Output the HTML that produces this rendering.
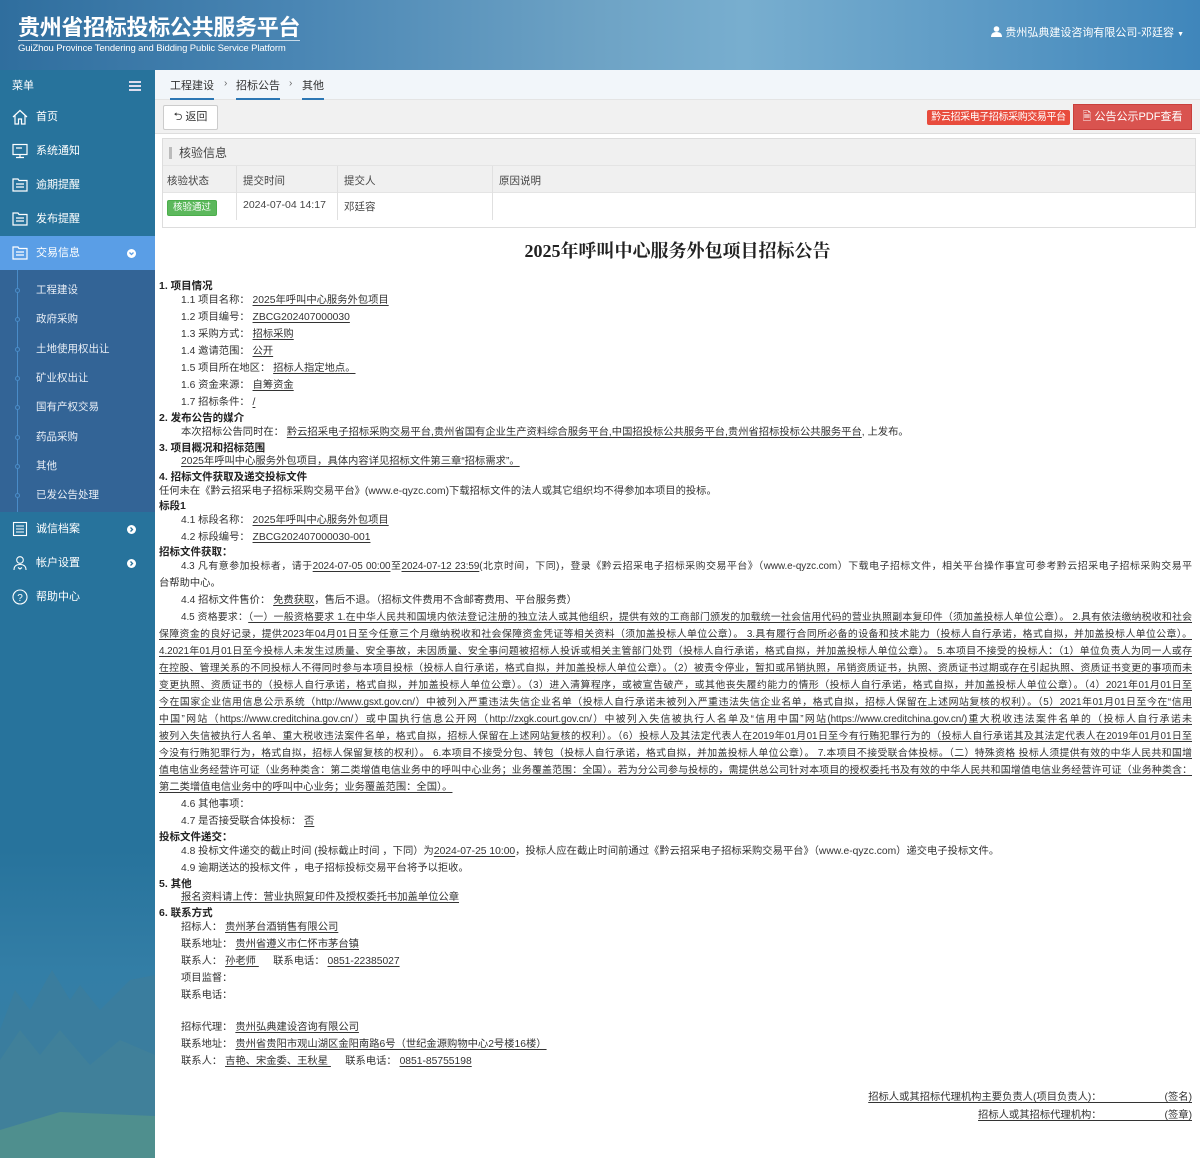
<!DOCTYPE html>
<html><head><meta charset="utf-8">
<style>
*{margin:0;padding:0;box-sizing:border-box}
body{width:1200px;height:1158px;overflow:hidden;position:relative;background:#fff;font-family:"Liberation Sans","Noto Sans CJK SC",sans-serif;font-size:11px;color:#333}
.hdr{position:absolute;left:0;top:0;width:1200px;height:70px;background:linear-gradient(90deg,#2f6e9e 0%,#4a86b4 25%,#6ea3c5 50%,#78aecf 62%,#5f9cc6 80%,#3f86bb 100%);box-shadow:0 2px 4px rgba(0,0,0,.3)}
.hdr .t1{position:absolute;left:18px;top:12px;color:#fff;font-size:22px;font-weight:bold;font-family:"Noto Sans CJK SC",sans-serif;letter-spacing:-0.3px;border-bottom:1px solid rgba(255,255,255,.7);line-height:28px}
.hdr .t2{position:absolute;left:18px;top:43px;color:#fff;font-size:9.5px;letter-spacing:-0.1px}
.hdr .u{position:absolute;right:16px;top:24px;color:#fff;font-size:11px}
.side{position:absolute;left:0;top:70px;width:155px;height:1088px;background:#27739c;color:#fff;overflow:hidden}
.side .it{position:absolute;left:0;width:155px;height:34px;line-height:34px;padding-left:36px;font-size:11px}
.side .ic{position:absolute;left:12px;top:9px;width:16px;height:16px}
.sub{position:absolute;left:0;top:200px;width:155px;height:242px;background:#336496}
.sub .vl{position:absolute;left:17px;top:0;width:1px;height:242px;background:#4a8cc8}
.sub div.s{position:absolute;left:36px;font-size:10.5px;color:#e8eef6}
.sub div.s:before{content:"";position:absolute;left:-21px;top:6px;width:3px;height:3px;border:1px solid #4a8cc8;border-radius:50%;background:#336496}
.arr{position:absolute;left:127px;top:13px;width:9px;height:9px;border-radius:50%;background:#fff}
.crumb{position:absolute;left:155px;top:70px;width:1045px;height:30px;background:#f2f6fa;border-bottom:1px solid #e4e4e4}
.crumb span{position:absolute;top:7px;font-size:11px;color:#333;border-bottom:2px solid #2d77b4;padding-bottom:5px}
.crumb i{position:absolute;top:8px;font-style:normal;color:#666;font-size:10px}
.tool{position:absolute;left:155px;top:100px;width:1045px;height:34px;background:#f1f1f1;border-bottom:1px solid #ddd}
.l{position:absolute;left:159px;white-space:nowrap;font-size:10.3px;color:#333;line-height:14px}
.in{left:181px}
.b{font-weight:bold;color:#222;font-size:10.5px}
u{text-decoration:underline;text-underline-offset:2px}
.j{width:1033px;text-align:justify;text-align-last:justify;white-space:normal;height:15px;overflow:hidden;font-size:9.9px;letter-spacing:-0.05px}
</style></head><body>
<div class="hdr">
<div class="t1">贵州省招标投标公共服务平台</div>
<div class="t2">GuiZhou Province Tendering and Bidding Public Service Platform</div>
<div class="u"><svg width="11" height="11" viewBox="0 0 11 11" style="vertical-align:-1px"><circle cx="5.5" cy="3" r="2.8" fill="#fff"/><path d="M0 11 Q0 6 5.5 6 Q11 6 11 11Z" fill="#fff"/></svg> 贵州弘典建设咨询有限公司-邓廷容 <span style="font-size:7px">▼</span></div>
</div>
<div class="side">
<svg style="position:absolute;left:0;top:780px" width="155" height="308" viewBox="0 0 155 308"><defs><linearGradient id="g" x1="0" y1="0" x2="0" y2="1"><stop offset="0" stop-color="#27739c"/><stop offset="0.4" stop-color="#337ea6"/><stop offset="1" stop-color="#3a7fa2"/></linearGradient></defs><rect width="155" height="308" fill="url(#g)"/><path d="M0 180 L15 140 L30 160 L52 120 L70 150 L80 135 L100 160 L130 130 L155 125 L155 308 L0 308Z" fill="#3a7d9e"/><path d="M0 210 L20 180 L40 205 L60 180 L90 215 L120 190 L155 205 L155 308 L0 308Z" fill="#40809a"/><path d="M0 280 L60 262 L155 266 L155 308 L0 308Z" fill="#4f8f8e"/></svg>
<div class="it" style="top:0;height:30px;line-height:32px;padding-left:12px;background:#27739c">菜单<span style="position:absolute;left:129px;top:11px;width:12px;height:2px;background:#dde;box-shadow:0 4px 0 #dde,0 8px 0 #dde"></span></div>
<div class="it" style="top:30px"><svg class="ic" viewBox="0 0 16 16"><path d="M1 8 L8 1.5 L15 8 M3 6.5 V15 H6.5 V10 H9.5 V15 H13 V6.5" fill="none" stroke="#fff" stroke-width="1.2"/></svg>首页</div>
<div class="it" style="top:64px"><svg class="ic" viewBox="0 0 16 16"><rect x="1" y="1.5" width="14" height="10" fill="none" stroke="#fff" stroke-width="1.2"/><path d="M8 11.5 V14 M4 14.5 H12 M4 5 H10" stroke="#fff" stroke-width="1.2"/></svg>系统通知</div>
<div class="it" style="top:98px"><svg class="ic" viewBox="0 0 16 16"><path d="M1 2 H6 L7 3.5 H15 V14 H1Z M4 7 H12 M4 10 H12" fill="none" stroke="#fff" stroke-width="1.2"/></svg>逾期提醒</div>
<div class="it" style="top:132px"><svg class="ic" viewBox="0 0 16 16"><path d="M1 2 H6 L7 3.5 H15 V14 H1Z M4 7 H12 M4 10 H12" fill="none" stroke="#fff" stroke-width="1.2"/></svg>发布提醒</div>
<div class="it" style="top:166px;background:#5a9ee6"><svg class="ic" viewBox="0 0 16 16"><path d="M1 2 H6 L7 3.5 H15 V14 H1Z M4 7 H12 M4 10 H12" fill="none" stroke="#fff" stroke-width="1.2"/></svg>交易信息<span class="arr"><svg width="9" height="9" viewBox="0 0 9 9" style="position:absolute;top:0;left:0"><path d="M2.5 3.5 L4.5 5.5 L6.5 3.5" fill="none" stroke="#5a9ee6" stroke-width="1.3"/></svg></span></div>
<div class="sub"><div class="vl"></div>
<div class="s" style="top:12px">工程建设</div><div class="s" style="top:41px">政府采购</div><div class="s" style="top:71px">土地使用权出让</div><div class="s" style="top:100px">矿业权出让</div><div class="s" style="top:129px">国有产权交易</div><div class="s" style="top:159px">药品采购</div><div class="s" style="top:188px">其他</div><div class="s" style="top:217px">已发公告处理</div></div>
<div class="it" style="top:442px"><svg class="ic" viewBox="0 0 16 16"><rect x="1.5" y="1.5" width="13" height="13" fill="none" stroke="#fff" stroke-width="1.1"/><path d="M4 5 H12 M4 8 H12 M4 11 H12" stroke="#fff"/></svg>诚信档案<span class="arr"><svg width="9" height="9" viewBox="0 0 9 9" style="position:absolute;top:0;left:0"><path d="M3.5 2.5 L5.5 4.5 L3.5 6.5" fill="none" stroke="#27739c" stroke-width="1.3"/></svg></span></div>
<div class="it" style="top:476px"><svg class="ic" viewBox="0 0 16 16"><circle cx="8" cy="5" r="3.3" fill="none" stroke="#fff" stroke-width="1.1"/><path d="M2 15 Q2 9.5 8 9.5 Q14 9.5 14 15 M6 12.5 L8 14 L10 12.5" fill="none" stroke="#fff" stroke-width="1.1"/></svg>帐户设置<span class="arr"><svg width="9" height="9" viewBox="0 0 9 9" style="position:absolute;top:0;left:0"><path d="M3.5 2.5 L5.5 4.5 L3.5 6.5" fill="none" stroke="#27739c" stroke-width="1.3"/></svg></span></div>
<div class="it" style="top:510px"><svg class="ic" viewBox="0 0 16 16"><circle cx="8" cy="8" r="7" fill="none" stroke="#fff" stroke-width="1.1"/><text x="8" y="12" font-size="10" fill="#fff" text-anchor="middle" font-family="Liberation Sans">?</text></svg>帮助中心</div>
</div>
<div class="crumb"><span style="left:15px">工程建设</span><i style="left:69px">›</i><span style="left:81px">招标公告</span><i style="left:134px">›</i><span style="left:147px">其他</span></div>
<div class="tool">
<div style="position:absolute;left:8px;top:5px;width:55px;height:25px;background:#fff;border:1px solid #ccc;border-radius:2px;line-height:23px;text-align:center;font-size:11px;color:#333">⮌ 返回</div>
<div style="position:absolute;left:772px;top:10px;width:143px;height:15px;background:#e84c3d;border-radius:2px;color:#fff;font-size:10px;line-height:15px;text-align:center;letter-spacing:-0.4px">黔云招采电子招标采购交易平台</div>
<div style="position:absolute;left:918px;top:4px;width:119px;height:26px;background:#d9534f;border:1px solid #c9403c;color:#fff;font-size:11px;line-height:24px;text-align:center">🗎 公告公示PDF查看</div>
</div>
<div style="position:absolute;left:162px;top:138px;width:1034px;height:90px;border:1px solid #ddd;background:#fff">
<div style="height:27px;background:#f0f0f0;border-bottom:1px solid #e4e4e4;position:relative"><span style="position:absolute;left:6px;top:8px;width:3px;height:12px;background:#bbb"></span><span style="position:absolute;left:16px;top:5px;font-size:12px;color:#444">核验信息</span></div>
<div style="height:27px;background:#f0f0f0;border-bottom:1px solid #e4e4e4;position:relative;font-size:10.5px;color:#444">
<span style="position:absolute;left:4px;top:7px">核验状态</span><span style="position:absolute;left:80px;top:7px">提交时间</span><span style="position:absolute;left:181px;top:7px">提交人</span><span style="position:absolute;left:336px;top:7px">原因说明</span></div>
<div style="height:27px;position:relative;font-size:10.5px;color:#444">
<span style="position:absolute;left:4px;top:7px;background:#5cb85c;color:#fff;font-size:9.5px;padding:0 5px;line-height:14px;border-radius:2px;border:1px solid #4cae4c">核验通过</span><span style="position:absolute;left:80px;top:6px">2024-07-04 14:17</span><span style="position:absolute;left:181px;top:6px">邓廷容</span></div>
<div style="position:absolute;left:73px;top:27px;width:1px;height:54px;background:#e0e0e0"></div><div style="position:absolute;left:174px;top:27px;width:1px;height:54px;background:#e0e0e0"></div><div style="position:absolute;left:329px;top:27px;width:1px;height:54px;background:#e0e0e0"></div>
</div>
<div style="position:absolute;left:155px;top:237px;width:1045px;text-align:center;font-family:'Liberation Serif','Noto Serif CJK SC',serif;font-weight:bold;font-size:18px;color:#222">2025年呼叫中心服务外包项目招标公告</div>

<div class="l b" style="top:279px">1. 项目情况</div>
<div class="l in" style="top:294px">1.1 项目名称： <u>2025年呼叫中心服务外包项目</u></div>
<div class="l in" style="top:311px">1.2 项目编号： <u>ZBCG202407000030</u></div>
<div class="l in" style="top:328px">1.3 采购方式： <u>招标采购</u></div>
<div class="l in" style="top:345px">1.4 邀请范围： <u>公开</u></div>
<div class="l in" style="top:362px">1.5 项目所在地区： <u>招标人指定地点。</u></div>
<div class="l in" style="top:379px">1.6 资金来源： <u>自筹资金</u></div>
<div class="l in" style="top:396px">1.7 招标条件： <u>/</u></div>
<div class="l b" style="top:411px">2. 发布公告的媒介</div>
<div class="l in" style="top:426px">本次招标公告同时在： <u>黔云招采电子招标采购交易平台,贵州省国有企业生产资料综合服务平台,中国招投标公共服务平台,贵州省招标投标公共服务平台</u>, 上发布。</div>
<div class="l b" style="top:441px">3. 项目概况和招标范围</div>
<div class="l in" style="top:455px"><u>2025年呼叫中心服务外包项目，具体内容详见招标文件第三章“招标需求”。</u></div>
<div class="l b" style="top:470px">4. 招标文件获取及递交投标文件</div>
<div class="l" style="top:485px">任何未在《黔云招采电子招标采购交易平台》(www.e-qyzc.com)下载招标文件的法人或其它组织均不得参加本项目的投标。</div>
<div class="l b" style="top:499px">标段1</div>
<div class="l in" style="top:514px">4.1 标段名称： <u>2025年呼叫中心服务外包项目</u></div>
<div class="l in" style="top:531px">4.2 标段编号： <u>ZBCG202407000030-001</u></div>
<div class="l b" style="top:545px">招标文件获取：</div>
<div class="l in j" style="top:560px;width:1011px">4.3 凡有意参加投标者，请于<u>2024-07-05 00:00</u>至<u>2024-07-12 23:59</u>(北京时间，下同)，登录《黔云招采电子招标采购交易平台》（www.e-qyzc.com）下载电子招标文件，相关平台操作事宜可参考黔云招采电子招标采购交易平</div>
<div class="l" style="top:577px">台帮助中心。</div>
<div class="l in" style="top:594px">4.4 招标文件售价： <u>免费获取</u>，售后不退。（招标文件费用不含邮寄费用、平台服务费）</div>
<div class="l in j" style="top:611px;width:1011px"><span>4.5 资格要求：</span><u>（一）一般资格要求 1.在中华人民共和国境内依法登记注册的独立法人或其他组织，提供有效的工商部门颁发的加载统一社会信用代码的营业执照副本复印件（须加盖投标人单位公章）。 2.具有依法缴纳税收和社会</u></div>
<div class="l j" style="top:628px"><u>保障资金的良好记录，提供2023年04月01日至今任意三个月缴纳税收和社会保障资金凭证等相关资料（须加盖投标人单位公章）。 3.具有履行合同所必备的设备和技术能力（投标人自行承诺，格式自拟，并加盖投标人单位公章）。</u></div>
<div class="l j" style="top:645px"><u>4.2021年01月01日至今投标人未发生过质量、安全事故，未因质量、安全事问题被招标人投诉或相关主管部门处罚（投标人自行承诺，格式自拟，并加盖投标人单位公章）。 5.本项目不接受的投标人：（1）单位负责人为同一人或存</u></div>
<div class="l j" style="top:662px"><u>在控股、管理关系的不同投标人不得同时参与本项目投标（投标人自行承诺，格式自拟，并加盖投标人单位公章）。（2）被责令停业，暂扣或吊销执照，吊销资质证书，执照、资质证书过期或存在引起执照、资质证书变更的事项而未</u></div>
<div class="l j" style="top:679px"><u>变更执照、资质证书的（投标人自行承诺，格式自拟，并加盖投标人单位公章）。（3）进入清算程序，或被宣告破产，或其他丧失履约能力的情形（投标人自行承诺，格式自拟，并加盖投标人单位公章）。（4）2021年01月01日至</u></div>
<div class="l j" style="top:696px"><u>今在国家企业信用信息公示系统（http://www.gsxt.gov.cn/）中被列入严重违法失信企业名单（投标人自行承诺未被列入严重违法失信企业名单，格式自拟，招标人保留在上述网站复核的权利）。（5）2021年01月01日至今在“信用</u></div>
<div class="l j" style="top:713px"><u>中国”网站（https://www.creditchina.gov.cn/）或中国执行信息公开网（http://zxgk.court.gov.cn/）中被列入失信被执行人名单及“信用中国”网站(https://www.creditchina.gov.cn/)重大税收违法案件名单的（投标人自行承诺未</u></div>
<div class="l j" style="top:730px"><u>被列入失信被执行人名单、重大税收违法案件名单，格式自拟，招标人保留在上述网站复核的权利）。（6）投标人及其法定代表人在2019年01月01日至今有行贿犯罪行为的（投标人自行承诺其及其法定代表人在2019年01月01日至</u></div>
<div class="l j" style="top:747px"><u>今没有行贿犯罪行为，格式自拟，招标人保留复核的权利）。 6.本项目不接受分包、转包（投标人自行承诺，格式自拟，并加盖投标人单位公章）。 7.本项目不接受联合体投标。（二）特殊资格 投标人须提供有效的中华人民共和国增</u></div>
<div class="l j" style="top:764px"><u>值电信业务经营许可证（业务种类含：第二类增值电信业务中的呼叫中心业务；业务覆盖范围：全国）。若为分公司参与投标的，需提供总公司针对本项目的授权委托书及有效的中华人民共和国增值电信业务经营许可证（业务种类含：</u></div>
<div class="l" style="top:781px"><u>第二类增值电信业务中的呼叫中心业务；业务覆盖范围：全国）。</u></div>
<div class="l in" style="top:798px">4.6 其他事项：</div>
<div class="l in" style="top:815px">4.7 是否接受联合体投标： <u>否</u></div>
<div class="l b" style="top:830px">投标文件递交：</div>
<div class="l in" style="top:845px">4.8 投标文件递交的截止时间 (投标截止时间 ，下同）为<u>2024-07-25 10:00</u>，投标人应在截止时间前通过《黔云招采电子招标采购交易平台》（www.e-qyzc.com）递交电子投标文件。</div>
<div class="l in" style="top:862px">4.9 逾期送达的投标文件 ，电子招标投标交易平台将予以拒收。</div>
<div class="l b" style="top:877px">5. 其他</div>
<div class="l in" style="top:891px"><u>报名资料请上传：营业执照复印件及授权委托书加盖单位公章</u></div>
<div class="l b" style="top:906px">6. 联系方式</div>
<div class="l in" style="top:921px">招标人： <u>贵州茅台酒销售有限公司</u></div>
<div class="l in" style="top:938px">联系地址： <u>贵州省遵义市仁怀市茅台镇</u></div>
<div class="l in" style="top:955px">联系人： <u>孙老师&nbsp;</u>&nbsp;&nbsp;&nbsp;&nbsp; 联系电话： <u>0851-22385027</u></div>
<div class="l in" style="top:972px">项目监督：</div>
<div class="l in" style="top:989px">联系电话：</div>
<div class="l in" style="top:1021px">招标代理： <u>贵州弘典建设咨询有限公司</u></div>
<div class="l in" style="top:1038px">联系地址： <u>贵州省贵阳市观山湖区金阳南路6号（世纪金源购物中心2号楼16楼）</u></div>
<div class="l in" style="top:1055px">联系人： <u>吉艳、宋金委、王秋星&nbsp;</u>&nbsp;&nbsp;&nbsp;&nbsp; 联系电话： <u>0851-85755198</u></div>
<div class="l" style="top:1091px;left:auto;right:8px"><u>招标人或其招标代理机构主要负责人(项目负责人)：&nbsp;&nbsp;&nbsp;&nbsp;&nbsp;&nbsp;&nbsp;&nbsp;&nbsp;&nbsp;&nbsp;&nbsp;&nbsp;&nbsp;&nbsp;&nbsp;&nbsp;&nbsp;&nbsp;&nbsp;&nbsp;&nbsp;(签名)</u></div>
<div class="l" style="top:1109px;left:auto;right:8px"><u>招标人或其招标代理机构：&nbsp;&nbsp;&nbsp;&nbsp;&nbsp;&nbsp;&nbsp;&nbsp;&nbsp;&nbsp;&nbsp;&nbsp;&nbsp;&nbsp;&nbsp;&nbsp;&nbsp;&nbsp;&nbsp;&nbsp;&nbsp;&nbsp;(签章)</u></div>
</body></html>
